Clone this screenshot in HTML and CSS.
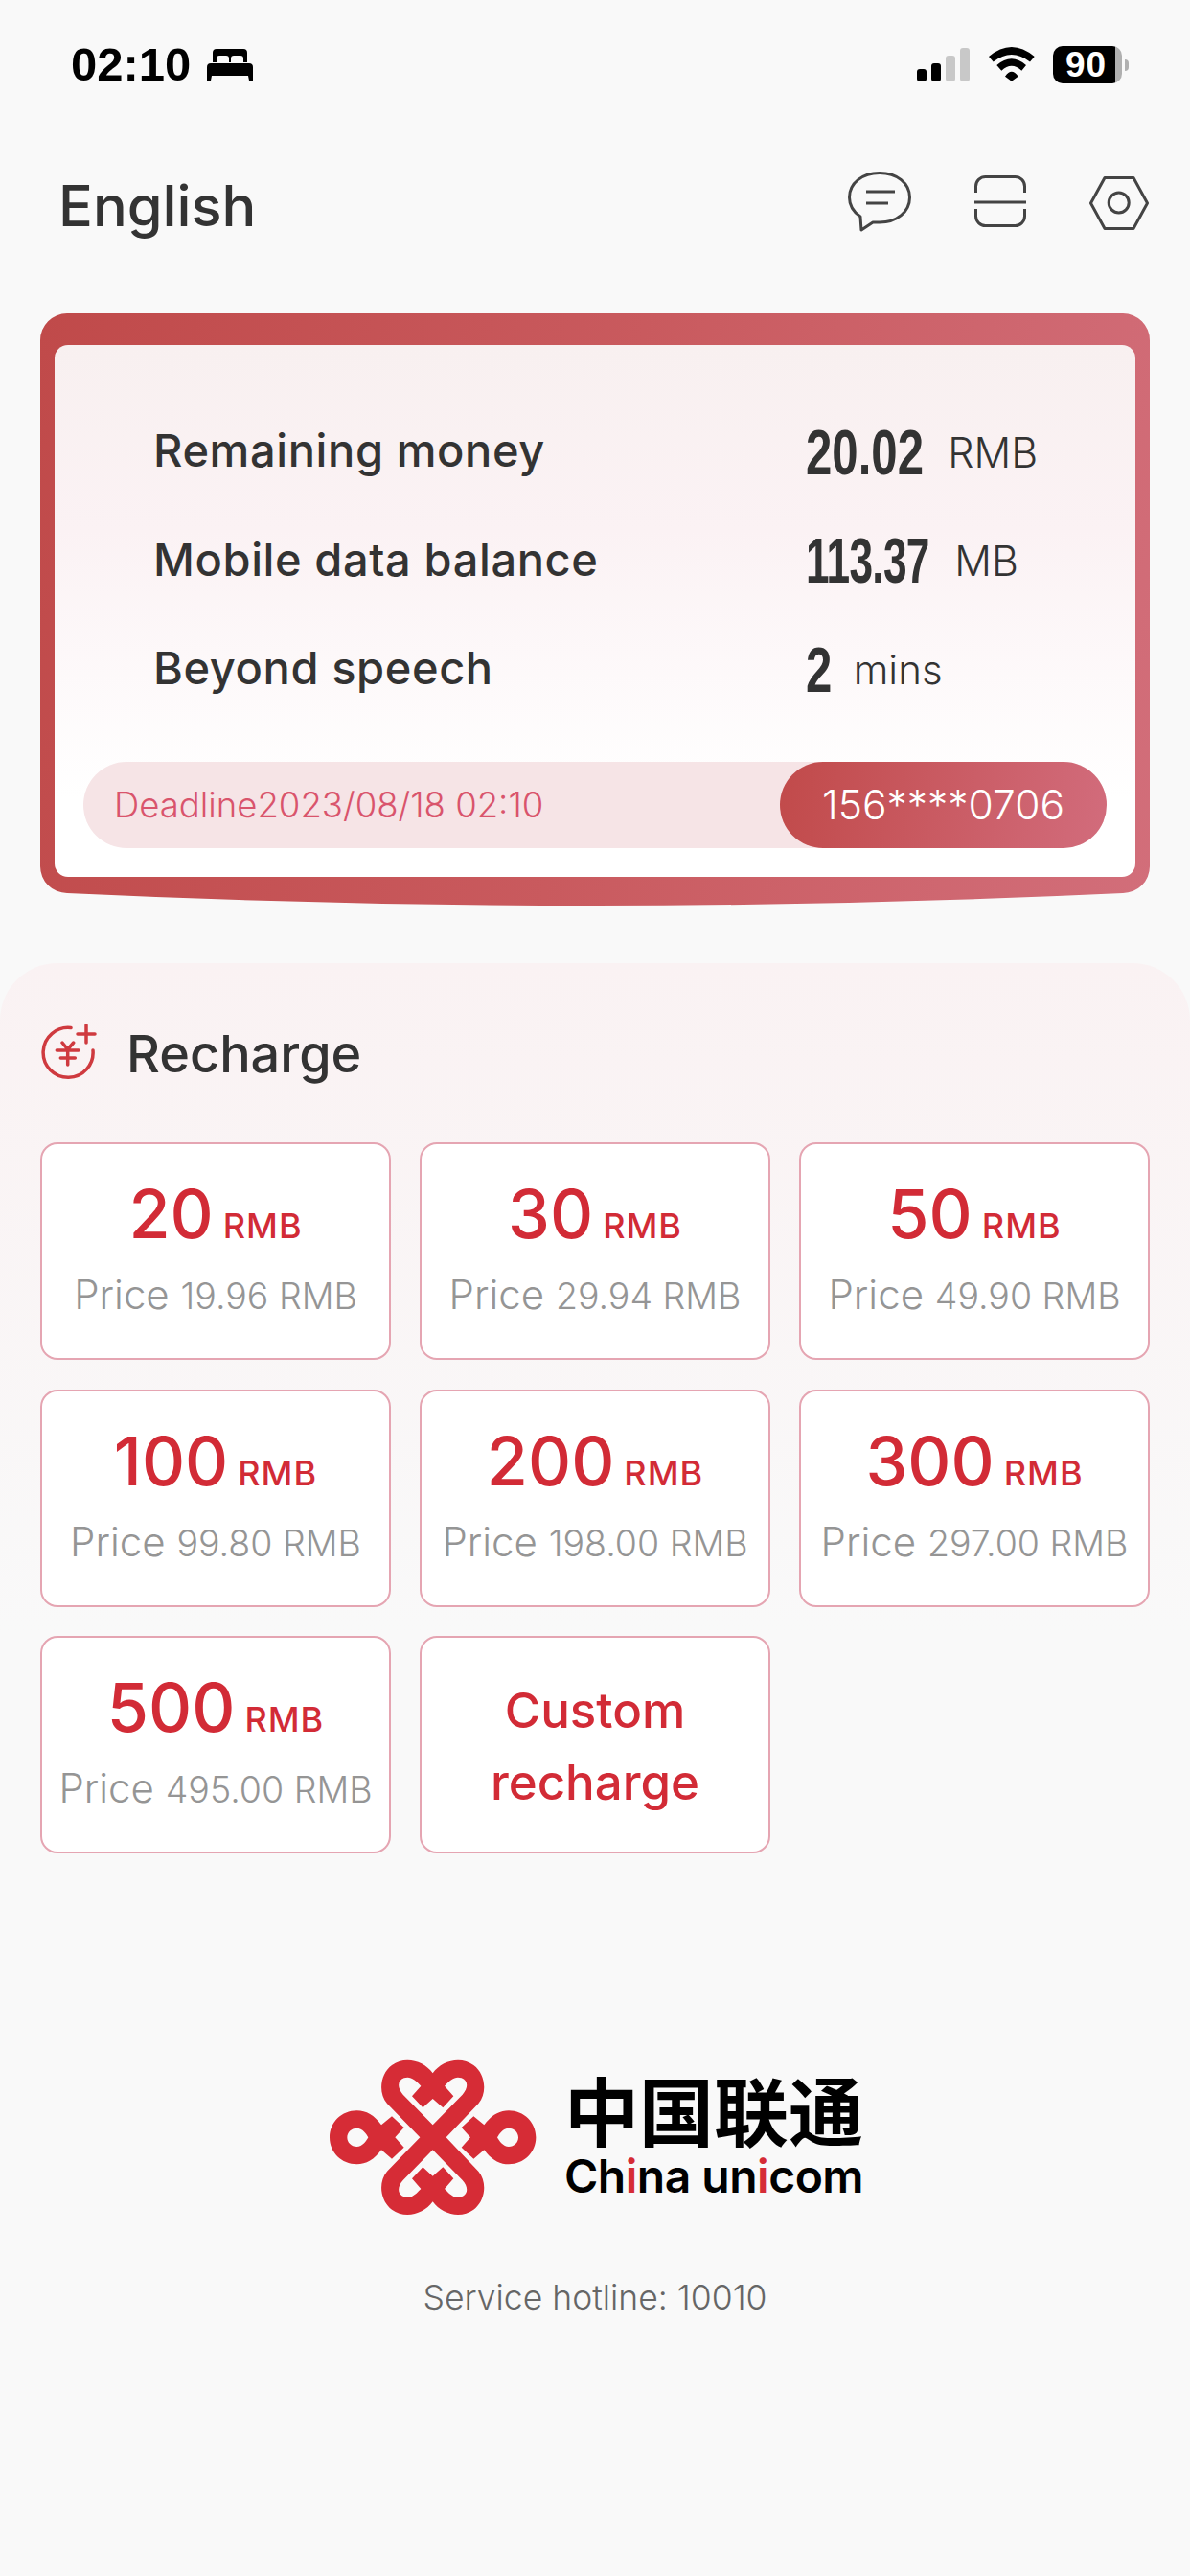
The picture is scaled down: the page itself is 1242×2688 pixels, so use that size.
FILE: index.html
```html
<!DOCTYPE html>
<html lang="en">
<head>
<meta charset="utf-8">
<title>China Unicom</title>
<link rel="stylesheet" href="styles.css">
</head>
<body>
<div class="page">
  <div class="status">
    <div class="status-left">
      <span class="time">02:10</span>
      <svg class="bed" viewBox="0 0 48 33"><path d="M6 14V4a4 4 0 0 1 4-4h28a4 4 0 0 1 4 4v10h-4V10a3 3 0 0 0-3-3h-7a3 3 0 0 0-3 3v4h-2v-4a3 3 0 0 0-3-3h-7a3 3 0 0 0-3 3v4zM4 15h40a4 4 0 0 1 4 4v14h-4l-1-5H5l-1 5H0V19a4 4 0 0 1 4-4z"/></svg>
    </div>
    <div class="status-right">
      <div class="signal"><i class="b1"></i><i class="b2"></i><i class="b3"></i><i class="b4"></i></div>
      <svg class="wifi" viewBox="0 0 48 36"><path d="M0 10Q23.8-10 47.7 10L43 15.5Q23.8.5 4.7 15.5zM8.3 19Q23.8 5.6 39 19L34.3 24.7Q23.8 14.7 13.3 24.7zM17 30.7Q23.8 20.7 30.7 30.7L23.8 35.7z"/></svg>
      <div class="battery"><div class="batt-body"><span class="batt-fill">90</span><span class="batt-rest"></span></div><span class="batt-nub"></span></div>
    </div>
  </div>

  <header class="header">
    <div class="lang">English</div>
    <div class="tools">
      <svg class="ico-chat" viewBox="0 0 66 63"><path d="M13 47C4 41 1.5 34 1.5 27 1.5 12 15 1.5 33 1.5S64.5 12 64.5 27 51 53 33 53H26L14 61z"/><path d="M19 21H49M19 33H42"/></svg>
      <svg class="ico-scan" viewBox="0 0 54 54"><path d="M1.5 18V11.5a10 10 0 0 1 10-10h31a10 10 0 0 1 10 10V18M1.5 35v7.5a10 10 0 0 0 10 10h31a10 10 0 0 0 10-10V35M0 28H54"/></svg>
      <svg class="ico-hex" viewBox="0 0 62 56"><path d="M1.5 28 16 1.5H46L60.5 28 46 54.500H16z"/><circle cx="30.700" cy="27.500" r="10.500"/></svg>
    </div>
  </header>

  <section class="card">
    <div class="card-inner">
      <div class="rows">
        <div class="row"><span class="label">Remaining money</span><span class="val"><b class="num n-money">20.02</b><span class="unit">RMB</span></span></div>
        <div class="row"><span class="label">Mobile data balance</span><span class="val"><b class="num n-data">113.37</b><span class="unit">MB</span></span></div>
        <div class="row"><span class="label">Beyond speech</span><span class="val"><b class="num n-voice">2</b><span class="unit u-mins">mins</span></span></div>
      </div>
      <div class="pill">
        <span class="deadline">Deadline2023/08/18 02:10</span>
        <span class="phone">156****0706</span>
      </div>
    </div>
  </section>

  <section class="recharge">
    <div class="title-row">
      <svg class="ico-yen" viewBox="0 0 60 60"><path d="M32 3.500A26 26 0 1 0 55 27M48 1V19M39 10H57M23 19 28.700 26 34.700 19M17.300 27H40M21.300 35H36.300M28.700 27V42"/></svg>
      <h2 class="title">Recharge</h2>
    </div>
    <div class="grid">
      <div class="tile"><div class="amt"><span class="big">20</span><span class="rmb">RMB</span></div><div class="price">Price <small>19.96 RMB</small></div></div>
      <div class="tile"><div class="amt"><span class="big">30</span><span class="rmb">RMB</span></div><div class="price">Price <small>29.94 RMB</small></div></div>
      <div class="tile"><div class="amt"><span class="big">50</span><span class="rmb">RMB</span></div><div class="price">Price <small>49.90 RMB</small></div></div>
      <div class="tile"><div class="amt"><span class="big">100</span><span class="rmb">RMB</span></div><div class="price">Price <small>99.80 RMB</small></div></div>
      <div class="tile"><div class="amt"><span class="big">200</span><span class="rmb">RMB</span></div><div class="price">Price <small>198.00 RMB</small></div></div>
      <div class="tile"><div class="amt"><span class="big">300</span><span class="rmb">RMB</span></div><div class="price">Price <small>297.00 RMB</small></div></div>
      <div class="tile"><div class="amt"><span class="big">500</span><span class="rmb">RMB</span></div><div class="price">Price <small>495.00 RMB</small></div></div>
      <div class="tile custom">Custom<br>recharge</div>
    </div>
  </section>

  <footer class="footer">
    <div class="logo">
      <svg class="knot" viewBox="0 0 780 600"><path fill-rule="evenodd" d="M328 301 225 195C195 160 205 100 240 75 280 45 340 60 368 100 396 60 456 45 496 75 531 100 541 160 511 195L410 301 511 407C541 442 531 502 496 527 456 557 396 542 368 502 340 542 280 557 240 527 205 502 195 442 225 407zM368 262 275 167C255 145 258 122 278 115 298 108 312 120 331 140L303 172 337 208 368 180 400 208 433 172 405 140C424 120 438 108 458 115 478 122 481 145 461 167zM368 340 275 435C255 457 258 480 278 487 298 494 312 482 331 462L303 430 337 394 368 422 400 394 433 430 405 462C424 482 438 494 458 487 478 480 481 457 461 435z"/><path fill-rule="evenodd" d="M207 262 240 235 278 270 250 301 278 332 240 368 207 340C185 370 160 385 130 385 83 385 45 348 45 301 45 254 83 217 130 217 160 217 185 232 207 262zM100 301C100 285 113 272 130 272 148 272 160 290 166 301 160 312 148 330 130 330 113 330 100 317 100 301z"/><path fill-rule="evenodd" d="M529 262 496 235 458 270 486 301 458 332 496 368 529 340C551 370 576 385 606 385 653 385 691 348 691 301 691 254 653 217 606 217 576 217 551 232 529 262zM636 301C636 285 623 272 606 272 588 272 576 290 570 301 576 312 588 330 606 330 623 330 636 317 636 301z"/></svg>
      <div class="brand">
        <div class="brand-cn">中国联通</div>
        <div class="brand-en">Ch<em>i</em>na un<em>i</em>com</div>
      </div>
    </div>
    <div class="hotline">Service hotline: 10010</div>
  </footer>
</div>
</body>
</html>
```
FILE: styles.css
```css
* { box-sizing: border-box; }
html, body { margin: 0; padding: 0; }
body { background: #f9f9f9; font-family: Inter, "Noto Sans CJK SC", sans-serif; color: #333; }
.page { width: 1242px; height: 2688px; overflow: hidden; }

.status { height: 100px; padding: 48px 64px 0 74px; display: flex; justify-content: space-between; align-items: flex-start; }
.status-left { display: flex; align-items: center; gap: 17px; height: 39px; }
.time { font-family: "Liberation Sans", sans-serif; font-weight: 700; font-size: 49px; line-height: 39px; color: #000; }
.bed { width: 48px; height: 33px; fill: #000; }
.status-right { display: flex; align-items: flex-start; }
.signal { display: flex; align-items: flex-end; gap: 5px; height: 37px; margin-right: 20px; }
.signal i { display: block; width: 10px; border-radius: 3px; background: #000; }
.signal .b1 { height: 13px; }
.signal .b2 { height: 19px; }
.signal .b3 { height: 27px; background: #c8c8c8; }
.signal .b4 { height: 35px; background: #c8c8c8; }
.wifi { width: 48px; height: 36px; fill: #000; margin-top: 1px; margin-right: 19px; }
.battery { display: flex; align-items: center; gap: 3px; height: 39px; }
.batt-body { display: flex; height: 39px; border-radius: 10px; overflow: hidden; }
.batt-fill { width: 65px; background: #000; color: #fff; font-family: "Liberation Sans", sans-serif; font-weight: 700; font-size: 37px; line-height: 39px; text-align: center; padding-left: 4px; letter-spacing: 1px; }
.batt-rest { width: 7px; background: #b0b0b0; }
.batt-nub { width: 4px; height: 12px; background: #b0b0b0; border-radius: 0 6px 6px 0; }

.header { height: 227px; padding: 0 43px 0 61px; display: flex; justify-content: space-between; align-items: center; }
.lang { font-size: 59.500px; font-weight: 500; color: #333; }
.tools { display: flex; align-items: flex-start; gap: 66px; padding-bottom: 6px; }
.tools svg { fill: none; stroke: #444; stroke-width: 3; stroke-linejoin: round; display: block; }
.ico-chat { width: 66px; height: 63px; }
.ico-scan { width: 54px; height: 54px; margin-top: 4px; }
.ico-hex { width: 62px; height: 56px; margin-top: 5px; }

.card { margin: 0 42px; height: 618px; padding: 33px 15px 30px; background: linear-gradient(100deg, #c04a4a 0%, #c95a5e 50%, #d26e7a 100%); clip-path: path("M28 0H1130a28 28 0 0 1 28 28V577a28 28 0 0 1-28 28Q579 631 28 605a28 28 0 0 1-28-28V28A28 28 0 0 1 28 0Z"); }
.card-inner { height: 555px; border-radius: 14px; background: linear-gradient(180deg, #f8f0f0 0%, #fbf2f4 35%, #fff 85%); padding: 53px 30px 30px; }
.rows { padding-left: 73px; }
.row { height: 113.5px; display: grid; grid-template-columns: 681px 1fr; align-items: center; }
.label { font-size: 47px; font-weight: 500; letter-spacing: .6px; color: #333; }
.val { display: flex; align-items: center; margin-top: 4px; }
.num { display: block; transform: scaleX(.745); transform-origin: left center; font-family: "Liberation Sans", sans-serif; font-weight: 700; font-size: 66px; line-height: 66px; color: #333; }
.n-money { margin-right: -17px; }
.n-data { transform: scaleX(.67); letter-spacing: -1px; margin-right: -37px; }
.n-voice { margin-right: 13px; }
.unit { font-size: 43px; font-weight: 300; color: #333; }
.u-mins { font-size: 42px; }
.pill { margin-top: 41.500px; height: 90px; border-radius: 45px; background: #f6e4e6; display: flex; justify-content: space-between; align-items: center; padding-left: 32px; }
.deadline { font-size: 36.500px; font-weight: 300; color: #d9546c; }
.phone { width: 341px; height: 90px; border-radius: 45px; background: linear-gradient(100deg, #c14a4a, #d26c7c); color: #fff; font-size: 42.500px; font-weight: 300; line-height: 90px; text-align: center; }

.recharge { margin-top: 60px; height: 929px; padding: 64px 42px 0; border-radius: 60px 60px 0 0; background: linear-gradient(180deg, #faf2f3 0%, #f9f9f9 75%); }
.title-row { display: flex; align-items: center; height: 60px; }
.ico-yen { width: 60px; height: 60px; fill: none; stroke: #cf3a3f; stroke-width: 3.500; stroke-linecap: round; margin-right: 30px; }
.title { margin: 0; font-size: 54px; font-weight: 500; color: #333; }
.grid { margin-top: 63px; display: grid; grid-template-columns: repeat(3, 366px); grid-auto-rows: 227px; column-gap: 30px; row-gap: 30.500px; }
.tile { background: #fff; border: 2px solid #e5a5b2; border-radius: 18px; display: flex; flex-direction: column; align-items: center; padding-top: 33px; }
.amt { display: flex; align-items: baseline; gap: 10px; color: #d22b36; height: 80px; }
.big { font-size: 70px; line-height: 80px; font-weight: 500; }
.rmb { font-size: 36px; font-weight: 500; letter-spacing: 1px; }
.price { margin-top: 19px; font-size: 42px; line-height: 50px; font-weight: 300; color: #959595; white-space: nowrap; }
.price small { font-size: 37.500px; font-weight: 300; }
.custom { justify-content: center; padding: 3px 0 0; text-align: center; font-size: 51px; line-height: 75px; font-weight: 500; color: #d22b36; }

.footer { margin-top: 196px; display: flex; flex-direction: column; align-items: center; }
.logo { display: flex; align-items: flex-start; margin-right: 14px; }
.knot { width: 260px; height: 200px; fill: #d62c36; }
.brand { padding-top: 28px; width: 310px; }
.brand-cn { font-family: "Noto Sans CJK SC", sans-serif; font-weight: 700; font-size: 78px; line-height: 84px; color: #000; white-space: nowrap; }
.brand-en { margin-top: 4px; font-size: 48px; line-height: 50px; font-weight: 600; color: #000; white-space: nowrap; letter-spacing: -.5px; }
.brand-en em { font-style: normal; color: #d62c36; }
.hotline { margin-top: 46px; font-size: 35.500px; font-weight: 300; color: #666; }
```
